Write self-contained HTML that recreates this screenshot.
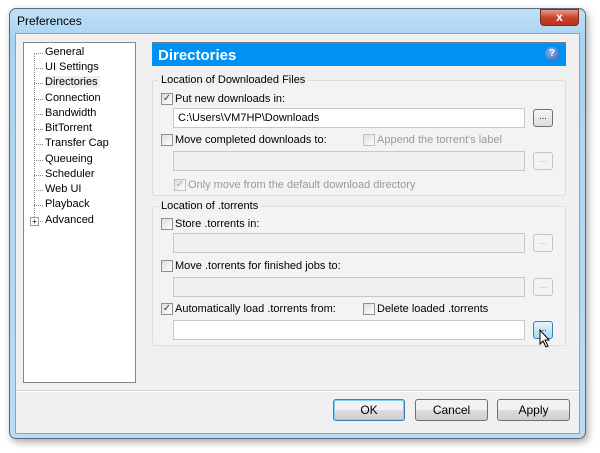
<!DOCTYPE html>
<html><head><style>
*{margin:0;padding:0;box-sizing:border-box}
body{width:600px;height:453px;background:#fff;position:relative;overflow:hidden;font-family:"Liberation Sans",sans-serif;font-size:11px;color:#000}
.a{position:absolute}
.win{left:9px;top:8px;width:577px;height:431px;border:1px solid #5a6a7a;border-radius:7px;background:linear-gradient(#bfe0f6,#a9d3f2 30px,#bcdcf3);box-shadow:2px 3px 8px rgba(0,0,0,.35)}
.client{left:15px;top:33px;width:565px;height:401px;background:#f0f0f0;border:1px solid #8aa;}
.tree{left:23px;top:42px;width:113px;height:341px;background:#fff;border:1px solid #828790}
.ti{position:absolute;left:21px;font-size:11px}
.dl{position:absolute;left:10px;width:9px;border-top:1px dotted #888}
.hdr{left:152px;top:42px;width:414px;height:24px;background:#0091f2;border-top:2px solid #6b7d8c;color:#fff;font-weight:bold;font-size:15px;padding:3px 0 0 6px}
.grp{border:1px solid #dcdcdc;border-radius:3px;background:#f3f3f3}
.gl{background:#f0f0f0;padding:0 3px}
.cb{position:absolute;width:12px;height:12px;border:1px solid #8f8f8f;background:linear-gradient(135deg,#ddd,#fff);font-size:10px;line-height:10px;text-align:center;color:#2a3f8a}
.dis{border-color:#c0c0c0;color:#aaa}
.inp{position:absolute;left:173px;width:352px;height:20px;border:1px solid #c8c8c8;background:#fff;padding:3px 4px}
.inp.d{background:#f0f0f0}
.btn{position:absolute;left:533px;width:20px;height:18px;border:1px solid #707070;border-radius:3px;background:linear-gradient(#f6f6f6,#dcdcdc);font-size:9px;text-align:center;line-height:12px}
.btn.d{border-color:#c5c5c5;color:#aaa;background:#f4f4f4}
.pb{position:absolute;top:399px;height:22px;border:1px solid #707070;border-radius:3px;background:linear-gradient(#f2f2f2 50%,#dddddd 50%,#cfcfcf);text-align:center;line-height:20px;font-size:12px}
.g{color:#999}
</style></head><body>
<div class="a win"></div>
<div class="a" style="left:17px;top:14px;font-size:12px">Preferences</div>
<div class="a" style="left:540px;top:9px;width:39px;height:17px;border:1px solid #7a2a20;border-radius:0 0 4px 4px;background:linear-gradient(#e99a88,#c9452e 50%,#b8301a);color:#fff;font-weight:bold;text-align:center;font-size:12px;line-height:15px">x</div>
<div class="a client"></div>
<div class="a tree">
<div class="a" style="left:10px;top:10px;height:172px;border-left:1px dotted #888"></div>
<div class="dl" style="top:10px"></div><div class="ti" style="top:3px">General</div>
<div class="dl" style="top:25px"></div><div class="ti" style="top:18px">UI Settings</div>
<div class="dl" style="top:40px"></div><div class="ti" style="top:33px;background:#eee;padding-right:2px">Directories</div>
<div class="dl" style="top:56px"></div><div class="ti" style="top:49px">Connection</div>
<div class="dl" style="top:71px"></div><div class="ti" style="top:64px">Bandwidth</div>
<div class="dl" style="top:86px"></div><div class="ti" style="top:79px">BitTorrent</div>
<div class="dl" style="top:101px"></div><div class="ti" style="top:94px">Transfer Cap</div>
<div class="dl" style="top:117px"></div><div class="ti" style="top:110px">Queueing</div>
<div class="dl" style="top:132px"></div><div class="ti" style="top:125px">Scheduler</div>
<div class="dl" style="top:147px"></div><div class="ti" style="top:140px">Web UI</div>
<div class="dl" style="top:162px"></div><div class="ti" style="top:155px">Playback</div>
<div class="dl" style="top:178px"></div><div class="ti" style="top:171px">Advanced</div>
<div class="a" style="left:6px;top:174px;width:9px;height:9px;border:1px solid #999;background:#fff;font-size:8px;line-height:7px;text-align:center">+</div>
</div>
<div class="a hdr">Directories</div>
<div class="a" style="left:545px;top:47px;width:14px;height:14px;border-radius:50%;background:radial-gradient(circle at 40% 35%,#8ab8f0,#2a5db0);color:#fff;font-size:10px;font-weight:bold;text-align:center;line-height:14px">?</div>

<div class="a grp" style="left:152px;top:80px;width:414px;height:116px"></div>
<div class="a gl" style="left:158px;top:74px">Location of Downloaded Files</div>
<div class="cb" style="left:161px;top:93px">✓</div><div class="a" style="left:175px;top:93px">Put new downloads in:</div>
<div class="inp" style="top:108px">C:\Users\VM7HP\Downloads</div>
<div class="btn" style="top:109px">...</div>
<div class="cb" style="left:161px;top:134px"></div><div class="a" style="left:175px;top:134px">Move completed downloads to:</div>
<div class="cb dis" style="left:363px;top:134px"></div><div class="a g" style="left:377px;top:134px">Append the torrent's label</div>
<div class="inp d" style="top:151px"></div>
<div class="btn d" style="top:152px">...</div>
<div class="cb dis" style="left:174px;top:179px;color:#aaa">✓</div><div class="a g" style="left:188px;top:179px">Only move from the default download directory</div>

<div class="a grp" style="left:152px;top:206px;width:414px;height:140px"></div>
<div class="a gl" style="left:158px;top:200px">Location of .torrents</div>
<div class="cb" style="left:161px;top:218px"></div><div class="a" style="left:175px;top:218px">Store .torrents in:</div>
<div class="inp d" style="top:233px"></div>
<div class="btn d" style="top:234px">...</div>
<div class="cb" style="left:161px;top:260px"></div><div class="a" style="left:175px;top:260px">Move .torrents for finished jobs to:</div>
<div class="inp d" style="top:277px"></div>
<div class="btn d" style="top:278px">...</div>
<div class="cb" style="left:161px;top:303px">✓</div><div class="a" style="left:175px;top:303px">Automatically load .torrents from:</div>
<div class="cb" style="left:363px;top:303px"></div><div class="a" style="left:377px;top:303px">Delete loaded .torrents</div>
<div class="inp" style="top:320px"></div>
<div class="btn" style="top:321px;border-color:#3c7fb1;background:linear-gradient(#e5f4fc,#a8d7f2)">...</div>
<svg class="a" style="left:539px;top:329px" width="12" height="19" viewBox="0 0 12 19"><path d="M1 1L1 15L4 12L7 18L9 17L6 11L10 11Z" fill="#fff" stroke="#000"/></svg>

<div class="a" style="left:16px;top:390px;width:563px;border-top:1px solid #d5d5d5;border-bottom:1px solid #fff"></div>
<div class="pb" style="left:333px;width:72px;border-color:#3c7fb1;box-shadow:inset 0 0 0 1px #7fd0f5">OK</div>
<div class="pb" style="left:415px;width:73px">Cancel</div>
<div class="pb" style="left:497px;width:73px">Apply</div>
</body></html>
